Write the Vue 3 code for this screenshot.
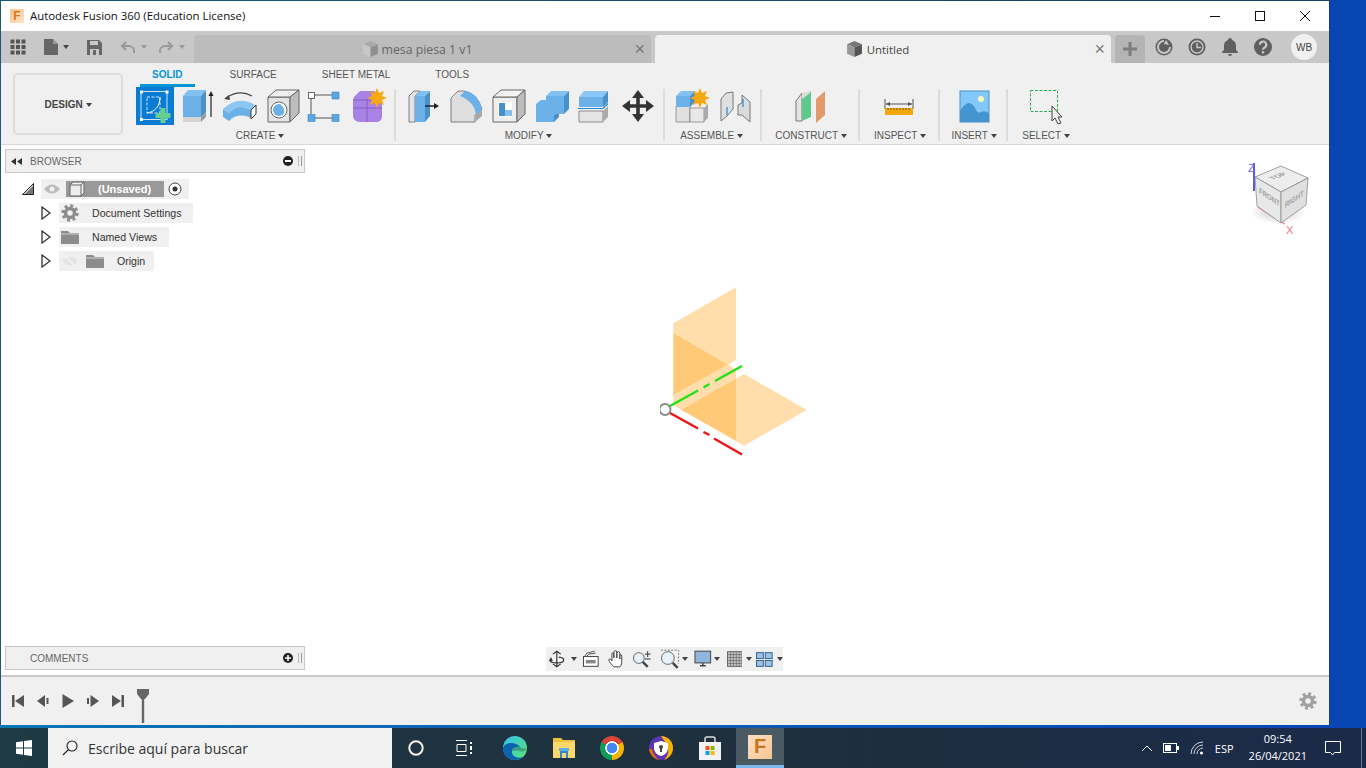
<template>
  <div class="desktop">
    <div class="window-row">
      <div class="window">
        <header class="titlebar">
          <span class="app-badge">F</span>
          <span class="title-text">Autodesk Fusion 360 (Education License)</span>
          <div class="win-controls">
            <span class="win-btn"><svg width="12" height="12" viewBox="0 0 12 12"><path d="M1 6.5h10" stroke="#111" /></svg></span>
            <span class="win-btn"><svg width="12" height="12" viewBox="0 0 12 12"><rect x="1.5" y="1.5" width="9" height="9" fill="none" stroke="#111" /></svg></span>
            <span class="win-btn"><svg width="12" height="12" viewBox="0 0 12 12"><path d="M1 1l10 10M11 1L1 11" stroke="#111" /></svg></span>
          </div>
        </header>

        <div class="tabbar">
          <div class="quick">
            <svg class="q-grid" width="16" height="16" viewBox="0 0 16 16" fill="#555">
              <rect v-for="c in gridCells" :key="c.k" :x="c.x" :y="c.y" width="4" height="4" />
            </svg>
            <svg class="q-file" width="14" height="16" viewBox="0 0 14 16"><path d="M0 0h9l5 5v11H0z" fill="#666" /><path d="M9 0l5 5H9z" fill="#999" /></svg>
            <span class="caret dark q-caret"></span>
            <svg class="q-save" width="15" height="15" viewBox="0 0 15 15"><path d="M0 0h12l3 3v12H0z" fill="#666" /><rect x="3" y="1" width="8" height="4" fill="#c8c8c8" /><rect x="3" y="9" width="9" height="6" fill="#c8c8c8" /><rect x="6" y="10" width="3" height="5" fill="#666" /></svg>
            <svg class="q-undo" width="14" height="13" viewBox="0 0 14 13"><path d="M5 1L1 5l4 4M1 5h7a5 5 0 0 1 5 5v2" fill="none" stroke="#999" stroke-width="2" /></svg>
            <span class="caret pale q-caret2"></span>
            <svg class="q-redo" width="14" height="13" viewBox="0 0 14 13"><path d="M9 1l4 4-4 4M13 5H6a5 5 0 0 0-5 5v2" fill="none" stroke="#999" stroke-width="2" /></svg>
            <span class="caret pale q-caret2"></span>
          </div>
          <div class="doc-tab inactive">
            <svg width="17" height="16" viewBox="0 0 16 15"><path d="M1 3l7-3 7 3-7 3z" fill="#aaa" /><path d="M1 3l7 3v9l-7-3z" fill="#c8c8c8" /><path d="M15 3L8 6v9l7-3z" fill="#8f8f8f" /></svg>
            <span class="doc-name">mesa piesa 1 v1</span>
            <span class="doc-close">×</span>
          </div>
          <div class="doc-tab active">
            <svg width="17" height="16" viewBox="0 0 16 15"><path d="M1 3l7-3 7 3-7 3z" fill="#777" /><path d="M1 3l7 3v9l-7-3z" fill="#999" /><path d="M15 3L8 6v9l7-3z" fill="#555" /></svg>
            <span class="doc-name">Untitled</span>
            <span class="doc-close">×</span>
          </div>
          <div class="plus-tile">
            <svg width="14" height="14" viewBox="0 0 14 14"><path d="M7 0v14M0 7h14" stroke="#7d7d7d" stroke-width="3" /></svg>
          </div>
          <div class="bar-icons">
            <svg width="18" height="18" viewBox="0 0 18 18"><circle cx="9" cy="9" r="8.5" fill="#5f5f5f" /><path d="M9 3a6 6 0 1 0 6 6" fill="none" stroke="#c8c8c8" stroke-width="2" /><path d="M11 2l3 5-5-1z" fill="#c8c8c8" /></svg>
            <svg width="18" height="18" viewBox="0 0 18 18"><circle cx="9" cy="9" r="8.5" fill="#5f5f5f" /><circle cx="9" cy="9" r="6" fill="none" stroke="#c8c8c8" stroke-width="1.4" /><path d="M9 5v4.500h4" fill="none" stroke="#c8c8c8" stroke-width="1.4" /></svg>
            <svg width="18" height="18" viewBox="0 0 16 18"><path d="M8 0a2 2 0 0 1 2 2c3 1 4 3 4 6v4l2 2v1H0v-1l2-2V8c0-3 1-5 4-6a2 2 0 0 1 2-2z" fill="#5f5f5f" /><path d="M6 16h4a2 2 0 0 1-4 0z" fill="#5f5f5f" /></svg>
            <svg width="18" height="18" viewBox="0 0 17 17"><circle cx="8.5" cy="8.5" r="8.5" fill="#5f5f5f" /><path d="M5.600 6.400a3 3 0 1 1 4.400 2.600c-1 .6-1.500 1-1.500 2.200" fill="none" stroke="#c8c8c8" stroke-width="2" /><rect x="7.400" y="12.400" width="2.200" height="2.200" fill="#c8c8c8" /></svg>
            <span class="avatar">WB</span>
          </div>
        </div>

        <div class="toolbar">
          <div class="design-slot">
            <button class="design-btn" type="button">DESIGN <span class="caret dark"></span></button>
          </div>
          <div class="ribbon">
            <nav class="ribbon-tabs">
              <span v-for="(t, i) in ribbonTabs" :key="t" class="ribbon-tab" :class="{ on: i === 0 }">{{ t }}</span>
            </nav>
            <div class="groups">
              <section class="group g-create">
                <div class="tools">
                  <svg class="ico sel" viewBox="0 0 38 38">
                    <rect x="5" y="4.500" width="26" height="28" fill="none" stroke="#cfe6f8" />
                    <path d="M4 3.500h3v3H4zM29.500 3.500h3v3h-3zM4 31h3v3H4z" fill="#fff" />
                    <rect x="11" y="10" width="13" height="16" fill="none" stroke="#cfe6f8" stroke-dasharray="3 1.500" />
                    <path d="M11 26c8-1 13-7 13-16" fill="none" stroke="#fff" />
                    <path d="M27 21v15M19.500 28.500h15" stroke="#63d08f" stroke-width="5" />
                  </svg>
                  <svg class="ico" viewBox="0 0 38 38">
                    <path d="M4 30h18v5H4z" fill="#d4d4d4" /><path d="M22 30l5-5v5l-5 5z" fill="#9a9a9a" />
                    <path d="M4 9h18v21H4z" fill="#6cb0e8" /><path d="M4 9l5-6h18l-5 6z" fill="#82c0f2" /><path d="M22 9l5-6v22l-5 5z" fill="#4a90c8" />
                    <path d="M32 30V7" stroke="#222" stroke-width="1.200" /><path d="M29.500 9L32 4l2.500 5z" fill="#222" />
                  </svg>
                  <svg class="ico" viewBox="0 0 38 38">
                    <path d="M5 11Q18 2 31 9" fill="none" stroke="#444" stroke-width="1.200" /><path d="M3 12l5-4 1 5z" fill="#444" />
                    <path d="M2 22Q17 8 34 18l-4 5Q17 16 8 26z" fill="#8cc6f5" />
                    <path d="M2 22v8l6 4v-8zM8 26Q17 16 30 23v8Q17 25 8 34z" fill="#6cb0e8" />
                    <path d="M30 23l5-5v9l-5 5z" fill="#fff" stroke="#333" />
                  </svg>
                  <svg class="ico" viewBox="0 0 38 38">
                    <path d="M4 10h22v25H4z" fill="#e4e4e4" stroke="#666" /><path d="M4 10l8-7h23l-9 7z" fill="#efefef" stroke="#666" /><path d="M26 10l9-7v23l-9 9z" fill="#bdbdbd" stroke="#666" />
                    <circle cx="15" cy="23" r="8" fill="#fff" stroke="#666" /><circle cx="15" cy="23" r="6" fill="#6cb0e8" /><path d="M17 17.500a6 6 0 0 1 3.500 7" fill="none" stroke="#fff" stroke-width="1.500" />
                  </svg>
                  <svg class="ico" viewBox="0 0 38 38">
                    <path d="M9 8h17M5 12v15M9 31h17" stroke="#555" />
                    <rect x="2.500" y="5.500" width="6" height="6" fill="#fff" stroke="#666" />
                    <rect x="26" y="5" width="7" height="7" fill="#5aa7e0" stroke="#3b87c0" stroke-width=".6" />
                    <rect x="2" y="27.500" width="7" height="7" fill="#5aa7e0" stroke="#3b87c0" stroke-width=".6" />
                    <rect x="26" y="27.500" width="7" height="7" fill="#5aa7e0" stroke="#3b87c0" stroke-width=".6" />
                  </svg>
                  <svg class="ico" viewBox="0 0 38 38">
                    <path d="M4 13q0-3 3-5l4-4h14l8 6v19q0 6-6 6H11q-7 0-7-7z" fill="#a882e4" />
                    <path d="M4 21h29M18 12v23M4 13h22" stroke="#7f5bbc" stroke-width=".9" fill="none" />
                    <path d="M28 1l2 5 5-2-2 5 5 2-5 2 2 5-5-2-2 5-2-5-5 2 2-5-5-2 5-2-2-5 5 2z" fill="#f7a80f" />
                  </svg>
                </div>
                <span class="group-label label-create">CREATE <span class="caret dark"></span></span>
              </section>

              <section class="group g-modify">
                <div class="tools">
                  <svg class="ico" viewBox="0 0 38 38">
                    <path d="M5 9l5-5h6L11 9v26H5z" fill="#e4e4e4" stroke="#666" stroke-width=".8" />
                    <path d="M11 9h10v26H11z" fill="#6cb0e8" /><path d="M11 9l5-5h10l-5 5z" fill="#82c0f2" /><path d="M21 9l5-5v25l-5 6z" fill="#4a90c8" />
                    <path d="M21 19h10" stroke="#222" stroke-width="1.500" /><path d="M30 16l5 3-5 3z" fill="#222" />
                  </svg>
                  <svg class="ico" viewBox="0 0 38 38">
                    <path d="M4 11l7-7h6q13 2 18 18l-7 6v7H4z" fill="#dedede" stroke="#666" stroke-width=".8" />
                    <path d="M18 4q13 2 17 18l-6 6q-1-13-16-19z" fill="#6cb0e8" /><path d="M29 28l6-6v7l-7 6z" fill="#a8a8a8" />
                  </svg>
                  <svg class="ico" viewBox="0 0 38 38">
                    <path d="M3 10h24v25H3z" fill="#eee" stroke="#666" /><path d="M3 10l8-7h24l-8 7z" fill="#f2f2f2" stroke="#666" /><path d="M27 10l8-7v24l-8 8z" fill="#bdbdbd" stroke="#666" />
                    <path d="M8 15h14v15H8z" fill="#fff" /><path d="M9 16h6v13H9z" fill="#4a90c8" /><path d="M15 23h7v6h-7z" fill="#82c0f2" />
                  </svg>
                  <svg class="ico" viewBox="0 0 38 38">
                    <path d="M3 17l5-4h13v22H3z" fill="#6cb0e8" /><path d="M21 28l5-5v7l-5 5z" fill="#4a90c8" />
                    <path d="M13 9l5-5h18l-5 5z" fill="#82c0f2" /><path d="M13 9h18v18H13z" fill="#6cb0e8" /><path d="M31 9l5-5v18l-5 5z" fill="#4a90c8" />
                  </svg>
                  <svg class="ico" viewBox="0 0 38 38">
                    <path d="M3 10l5-6h24l-5 6z" fill="#8cc6f5" /><path d="M3 10h24v10H3z" fill="#6cb0e8" /><path d="M27 10l5-6v11l-5 5z" fill="#4a90c8" />
                    <path d="M2 21.500h25l5-5" fill="none" stroke="#1e88d8" stroke-width="1.200" />
                    <path d="M3 24h24v11H3z" fill="#e4e4e4" stroke="#666" stroke-width=".7" /><path d="M27 24l5-5v11l-5 5z" fill="#aaa" />
                  </svg>
                  <svg class="ico" viewBox="0 0 38 38">
                    <path d="M19 3l6 8h-4.200v6.200H27V13l8 6-8 6v-4.200h-6.200V27H25l-6 8-6-8h4.200v-6.200H11V25l-8-6 8-6v4.200h6.200V11H13z" fill="#333" />
                  </svg>
                </div>
                <span class="group-label shift-left">MODIFY <span class="caret dark"></span></span>
              </section>

              <section class="group g-assemble">
                <div class="tools">
                  <svg class="ico" viewBox="0 0 38 38">
                    <path d="M3 19h14v16H3z" fill="#e0e0e0" stroke="#777" stroke-width=".7" /><path d="M17 21h14v14H17z" fill="#e8e8e8" stroke="#777" stroke-width=".7" /><path d="M31 21l4-4v14l-4 4z" fill="#aaa" />
                    <path d="M3 9l5-5h14l-5 5z" fill="#82c0f2" /><path d="M3 9h14v11H3z" fill="#6cb0e8" /><path d="M17 9l5-5v11l-5 5z" fill="#4a90c8" />
                    <path d="M27 1l2 5 5-2-2 5 5 2-5 2 2 5-5-2-2 5-2-5-5 2 2-5-5-2 5-2-2-5 5 2z" fill="#f7a80f" />
                  </svg>
                  <svg class="ico" viewBox="0 0 38 38">
                    <path d="M5 12l5-6 7-1v17l-6 7-6 5z" fill="#e0e0e0" stroke="#777" />
                    <path d="M22 18l4-2V8l8 7v20l-8-7h-4z" fill="#dcdcdc" stroke="#777" />
                    <path d="M11 20v8M27 12v8" stroke="#1e88d8" stroke-width="1.200" />
                  </svg>
                </div>
                <span class="group-label shift-left">ASSEMBLE <span class="caret dark"></span></span>
              </section>

              <section class="group g-construct">
                <div class="tools">
                  <svg class="ico" viewBox="0 0 38 38">
                    <path d="M4 14l6-8v28H4z" fill="#e4e4e4" stroke="#777" /><path d="M10 12l9-8v26l-9 4z" fill="#5fc98a" />
                    <path d="M10 6l8-2v2l-8 6z" fill="#ddd" />
                    <path d="M24 12l9-8v24l-9 8z" fill="#e4996a" />
                  </svg>
                </div>
                <span class="group-label">CONSTRUCT <span class="caret dark"></span></span>
              </section>

              <section class="group g-inspect">
                <div class="tools">
                  <svg class="ico" viewBox="0 0 38 38">
                    <path d="M4 12v10M32 12v10M5 17h26" stroke="#555" /><path d="M5 17l4-2v4zM31 17l-4-2v4z" fill="#555" />
                    <rect x="4" y="21" width="28" height="7" fill="#f4a70c" />
                    <path d="M7 21v2M10 21v2M13 21v2M16 21v2M19 21v2M22 21v2M25 21v2M28 21v2" stroke="#7a5a10" />
                  </svg>
                </div>
                <span class="group-label">INSPECT <span class="caret dark"></span></span>
              </section>

              <section class="group g-insert">
                <div class="tools">
                  <svg class="ico" viewBox="0 0 38 38">
                    <rect x="5" y="4" width="29" height="31" fill="#82c8fb" stroke="#4a90c8" />
                    <circle cx="26" cy="12" r="3" fill="#fbf5c0" />
                    <path d="M5 35V24q5-8 9-8t7 7q2 4 5 2t8 1v9z" fill="#4494cf" />
                  </svg>
                </div>
                <span class="group-label">INSERT <span class="caret dark"></span></span>
              </section>

              <section class="group g-select">
                <div class="tools">
                  <svg class="ico" viewBox="0 0 38 38">
                    <rect x="3.500" y="3.500" width="27" height="21" fill="none" stroke="#2eaa5a" stroke-dasharray="3 1.500" />
                    <path d="M25 19v15l3-3 3 6 3-1-3-6h4z" fill="#eee" stroke="#444" />
                  </svg>
                </div>
                <span class="group-label">SELECT <span class="caret dark"></span></span>
              </section>
            </div>
          </div>
        </div>

        <main class="canvas">
          <aside class="browser">
            <div class="panel-head">
              <svg width="11" height="7" viewBox="0 0 11 7" fill="#333"><path d="M5 0v7L0 3.500zM11 0v7L6 3.500z" /></svg>
              <span class="panel-title">BROWSER</span>
              <svg class="panel-end" width="10" height="10" viewBox="0 0 10 10"><circle cx="5" cy="5" r="5" fill="#222" /><path d="M2 5h6" stroke="#fff" stroke-width="2" /></svg>
              <span class="panel-grip"></span>
            </div>
            <div class="tree">
              <div class="tree-row root">
                <svg class="twisty" width="12" height="12" viewBox="0 0 12 12"><path d="M11.500 .5v11H.5z" fill="#ddd" stroke="#222" /><path d="M11 3v8H3z" fill="#777" /></svg>
                <div class="tree-pill">
                  <svg width="18" height="12" viewBox="0 0 18 12"><path d="M1 6q8-9 16 0-8 9-16 0z" fill="#bbb" /><circle cx="9" cy="6" r="2.500" fill="#f0f0f0" /></svg>
                  <div class="root-label">
                    <svg width="16" height="16" viewBox="0 0 16 16"><path d="M1 4l3-3h11v11l-3 3H1z" fill="#ededed" stroke="#666" /><path d="M1 4h11v11M12 4l3-3" fill="none" stroke="#666" /></svg>
                    <span>(Unsaved)</span>
                  </div>
                  <svg width="14" height="14" viewBox="0 0 14 14"><circle cx="7" cy="7" r="6" fill="#fff" stroke="#444" /><circle cx="7" cy="7" r="2.500" fill="#333" /></svg>
                </div>
              </div>
              <div class="tree-row">
                <svg class="twisty" width="10" height="14" viewBox="0 0 10 14"><path d="M1 1l8 6-8 6z" fill="#fff" stroke="#333" stroke-width="1.300" /></svg>
                <div class="tree-pill item settings">
                  <svg width="18" height="18" viewBox="0 0 18 18"><circle cx="9" cy="9" r="4.500" fill="none" stroke="#8c8c8c" stroke-width="3.500" /><circle cx="9" cy="9" r="7.200" fill="none" stroke="#8c8c8c" stroke-width="3" stroke-dasharray="2.900 2.750" /></svg>
                  <span class="tree-text">Document Settings</span>
                </div>
              </div>
              <div class="tree-row">
                <svg class="twisty" width="10" height="14" viewBox="0 0 10 14"><path d="M1 1l8 6-8 6z" fill="#fff" stroke="#333" stroke-width="1.300" /></svg>
                <div class="tree-pill item views">
                  <svg class="folder" width="18" height="13" viewBox="0 0 18 13"><path d="M0 0h7l2 2h9v11H0z" fill="#8c8c8c" /><path d="M0 3h18" stroke="#f0f0f0" stroke-width=".7" /></svg>
                  <span class="tree-text">Named Views</span>
                </div>
              </div>
              <div class="tree-row">
                <svg class="twisty" width="10" height="14" viewBox="0 0 10 14"><path d="M1 1l8 6-8 6z" fill="#fff" stroke="#333" stroke-width="1.300" /></svg>
                <div class="tree-pill item origin">
                  <svg width="18" height="14" viewBox="0 0 18 14"><path d="M1 7q8-9 16 0-8 9-16 0z" fill="#e3e3e3" /><path d="M3 1l12 12" stroke="#f0f0f0" stroke-width="2" /></svg>
                  <svg class="folder" width="18" height="13" viewBox="0 0 18 13"><path d="M0 0h7l2 2h9v11H0z" fill="#8c8c8c" /><path d="M0 3h18" stroke="#f0f0f0" stroke-width=".7" /></svg>
                  <span class="tree-text">Origin</span>
                </div>
              </div>
            </div>
          </aside>

          <svg class="origin-svg" width="160" height="180" viewBox="660 285 160 180">
            <polygon points="673.300,323.300 736,287.300 736,360 673.300,395" class="plane" />
            <polygon points="673.300,333.300 736,369.300 736,440.700 673.300,405" class="plane" />
            <polygon points="681.300,410 744,374 806.700,410 744,445.700" class="plane" />
            <path d="M670 406l28-15.500M703.500 387.500l6-3.500M715 381l27-15" stroke="#25e015" stroke-width="2.500" fill="none" />
            <path d="M670 413l28 15.500M703.500 432l6 3M714 438.500l28 16" stroke="#f01414" stroke-width="2.500" fill="none" />
            <circle cx="665" cy="409.500" r="5.500" fill="#fff" stroke="#8a8a8a" stroke-width="2" />
          </svg>

          <svg class="view-cube" width="70" height="80" viewBox="1245 160 70 80">
            <defs>
              <radialGradient id="cubeShade" cx="50%" cy="50%" r="50%">
                <stop offset="0%" stop-color="#888" stop-opacity=".5" />
                <stop offset="100%" stop-color="#999" stop-opacity="0" />
              </radialGradient>
            </defs>
            <ellipse cx="1278" cy="212" rx="28" ry="12" fill="url(#cubeShade)" />
            <path d="M1254 163v28" stroke="#5a5ae6" stroke-width="2" />
            <path d="M1258 207l27 17" stroke="#f3a3a3" stroke-width="2" />
            <polygon points="1255,177 1281,166 1308,178 1281,192" fill="#ededed" stroke="#8a8a8a" stroke-width=".8" />
            <polygon points="1255,177 1281,192 1281,223 1257,206" fill="#e8e8e8" stroke="#8a8a8a" stroke-width=".8" />
            <polygon points="1281,192 1308,178 1306,205 1281,223" fill="#e0e0e0" stroke="#8a8a8a" stroke-width=".8" />
            <text class="cube-text" transform="matrix(.9 -.35 .9 .4 1273 180)">TOP</text>
            <text class="cube-text" transform="matrix(.75 .5 0 1 1259 193)">FRONT</text>
            <text class="cube-text" transform="matrix(.75 -.5 0 1 1285 208)">RIGHT</text>
            <text class="axis-z" x="1248" y="172">Z</text>
            <text class="axis-x" x="1286" y="234">X</text>
          </svg>

          <aside class="comments">
            <span class="panel-title">COMMENTS</span>
            <svg class="panel-end" width="10" height="10" viewBox="0 0 10 10"><circle cx="5" cy="5" r="5" fill="#222" /><path d="M2 5h6M5 2v6" stroke="#fff" stroke-width="1.600" /></svg>
            <span class="panel-grip"></span>
          </aside>

          <div class="navbar">
            <svg width="18" height="18" viewBox="0 0 18 18"><path d="M9 1v16M5 4l4-3 4 3M5 14l4 3 4-3" fill="none" stroke="#333" stroke-width="1.200" /><path d="M2 10a7 3 0 0 0 14 0 7 3 0 0 0-5-3" fill="none" stroke="#333" stroke-width="1.300" /><path d="M3 7l-2 4 4 0z" fill="#333" /></svg>
            <span class="caret dark ml5"></span>
            <svg class="ml5" width="18" height="18" viewBox="0 0 18 18"><rect x="1.500" y="6.500" width="15" height="10" fill="#fff" stroke="#444" /><rect x="4" y="10" width="10" height="3.500" fill="#888" /><path d="M3 6l2-3 8-2M5 6l2-2 7-1" fill="none" stroke="#555" /></svg>
            <svg class="ml9" width="18" height="18" viewBox="0 0 18 18"><path d="M6 17c-2-2-5-5-5-7s2-1 3 1V4c0-2 2-2 2 0v4-6c0-2 3-2 3 0v6-5c0-2 3-2 3 0v6-3c0-2 2-2 2 0v6c0 3-1 4-2 5z" fill="#fff" stroke="#444" /></svg>
            <svg class="ml6" width="20" height="18" viewBox="0 0 20 18"><circle cx="7" cy="8" r="5.500" fill="#e8f2fa" stroke="#666" /><path d="M11 12l5 5" stroke="#444" stroke-width="2.500" /><path d="M16 1v6M13 4h6M13 9h6" stroke="#333" /></svg>
            <svg class="ml9" width="20" height="20" viewBox="0 0 20 20"><path d="M1 1h18v14" fill="none" stroke="#777" stroke-dasharray="2 1.500" /><circle cx="8" cy="9" r="6.500" fill="#e8f2fa" stroke="#666" /><path d="M13 14l5 5" stroke="#444" stroke-width="2.500" /></svg>
            <span class="caret dark ml2"></span>
            <svg class="ml6" width="18" height="18" viewBox="0 0 18 18"><rect x="1" y="1" width="16" height="12" fill="#8fb6dc" stroke="#444" /><path d="M6 16h6M9 13v3" stroke="#444" stroke-width="1.500" /></svg>
            <span class="caret dark ml2"></span>
            <svg class="ml7" width="16" height="16" viewBox="0 0 16 16"><rect x=".5" y=".5" width="15" height="15" fill="#c4c4c4" stroke="#666" /><path d="M3.500 0v16M6.500 0v16M9.500 0v16M12.500 0v16M0 3.500h16M0 6.500h16M0 9.500h16M0 12.500h16" stroke="#666" stroke-width=".7" /></svg>
            <span class="caret dark ml4"></span>
            <svg class="ml4" width="17" height="15" viewBox="0 0 17 15"><rect x=".5" y=".5" width="7" height="6" fill="#9cc3e6" stroke="#335f8f" /><rect x="9.500" y=".5" width="7" height="6" fill="#9cc3e6" stroke="#335f8f" /><rect x=".5" y="8.500" width="7" height="6" fill="#9cc3e6" stroke="#335f8f" /><rect x="9.500" y="8.500" width="7" height="6" fill="#9cc3e6" stroke="#335f8f" /></svg>
            <span class="caret dark ml4"></span>
          </div>
        </main>

        <footer class="timeline">
          <div class="player">
            <svg width="14" height="14" viewBox="0 0 14 14" fill="#555"><rect x="1" y="1" width="2.500" height="12" /><path d="M13 1v12L4 7z" /></svg>
            <svg width="14" height="14" viewBox="0 0 14 14" fill="#555"><path d="M9 1v12L1 7z" /><rect x="10.500" y="4" width="2" height="6" /></svg>
            <svg width="14" height="14" viewBox="0 0 14 14" fill="#555"><path d="M1.500 0v14L13 7z" /></svg>
            <svg width="14" height="14" viewBox="0 0 14 14" fill="#555"><rect x="1" y="4" width="2" height="6" /><path d="M4.500 1v12L13 7z" /></svg>
            <svg width="14" height="14" viewBox="0 0 14 14" fill="#555"><path d="M1 1v12l9-6z" /><rect x="10.500" y="1" width="2.500" height="12" /></svg>
          </div>
          <svg class="marker" width="14" height="34" viewBox="0 0 14 34"><path d="M1 0h12v5l-4 5H5L1 5z" fill="#666" /><rect x="5.800" y="8" width="2.400" height="26" fill="#666" /></svg>
          <svg class="timeline-gear" width="18" height="18" viewBox="0 0 18 18"><circle cx="9" cy="9" r="4.500" fill="none" stroke="#a0a0a0" stroke-width="3.500" /><circle cx="9" cy="9" r="7.200" fill="none" stroke="#a0a0a0" stroke-width="3" stroke-dasharray="2.900 2.750" /></svg>
        </footer>
      </div>
    </div>

    <div class="taskbar">
      <div class="start">
        <svg width="16" height="16" viewBox="0 0 16 16" fill="#fff"><path d="M0 2.200l7-1v6.300H0zM8 1l8-1v7.500H8zM0 8.500h7v6.300l-7-1zM8 8.500h8V16l-8-1z" /></svg>
      </div>
      <div class="search">
        <svg width="16" height="16" viewBox="0 0 16 16"><circle cx="10" cy="6" r="5" fill="none" stroke="#222" stroke-width="1.100" /><path d="M6.500 9.500L1 15" stroke="#222" stroke-width="1.100" /></svg>
        <span>Escribe aquí para buscar</span>
      </div>
      <div class="task-slot"><svg width="16" height="16" viewBox="0 0 16 16"><circle cx="8" cy="8" r="6.700" fill="none" stroke="#f2f2f2" stroke-width="2" /></svg></div>
      <div class="task-slot"><svg width="18" height="16" viewBox="0 0 18 16"><path d="M1 .5h11M1 15.500h11M2 4.500h9v7H2z" fill="none" stroke="#fff" /><path d="M15 2h2v2h-2zM15 6h2v4h-2zM15 12h2v2h-2z" fill="#fff" /></svg></div>
      <div class="task-slot app first-app"><svg width="24" height="24" viewBox="0 0 24 24"><defs><linearGradient id="edgeA" x1="0" y1="0" x2="1" y2="1"><stop offset="0" stop-color="#35c1f1" /><stop offset="1" stop-color="#5be36f" /></linearGradient></defs><circle cx="12" cy="12" r="12" fill="url(#edgeA)" /><path d="M0 12c0 8 6 12 12 12 3 0 6-1 8-3-6 2-12-1-11-6 0-3 4-5 8-4-3-5-15-6-17 1z" fill="#0c62ad" /><path d="M9 15c0-3 4-5 8-4 2 1 3 2 7 1-1 3-5 4-8 3s-5 0-7 0z" fill="#1f3a44" opacity=".35" /></svg></div>
      <div class="task-slot app"><svg width="22" height="20" viewBox="0 0 22 20"><path d="M0 0h8l2 2h12v18H0z" fill="#f0c040" /><path d="M0 4h22v16H0z" fill="#fcd86a" /><path d="M7 12h8v8h-2v-5H9v5H7z" fill="#2f88d0" /><path d="M6 10h10v3H6z" fill="#5ab0ee" /></svg></div>
      <div class="task-slot app"><span class="chrome"></span></div>
      <div class="task-slot app"><svg width="24" height="24" viewBox="0 0 24 24"><circle cx="12" cy="12" r="12" fill="#5e35b1" /><path d="M12 0a12 12 0 0 1 12 12c0 6-4 10-9 12 5-5 6-12 1-18z" fill="#f4b400" /><path d="M0 13c1 6 5 10 11 11-4-2-7-6-8-11z" fill="#ef6c00" /><path d="M12 5l7 2v5c0 4-3 7-7 8-4-1-7-4-7-8V7z" fill="#fff" /><circle cx="12" cy="11" r="2" fill="#444" /><rect x="11" y="12" width="2" height="4" fill="#444" /></svg></div>
      <div class="task-slot app"><svg width="24" height="24" viewBox="0 0 24 24"><path d="M7 6V3q0-2 2-2h6q2 0 2 2v3" fill="none" stroke="#ddd" stroke-width="1.500" /><path d="M1 6h22v18H1z" fill="#f2f2f2" /><path d="M7.500 10h4v4h-4z" fill="#f25022" /><path d="M12.500 10h4v4h-4z" fill="#7fba00" /><path d="M7.500 15h4v4h-4z" fill="#00a4ef" /><path d="M12.500 15h4v4h-4z" fill="#ffb900" /></svg></div>
      <div class="task-slot fusion"><span class="fusion-tile">F</span></div>
      <div class="tray">
        <svg width="12" height="7" viewBox="0 0 12 7"><path d="M1 6l5-5 5 5" fill="none" stroke="#fff" /></svg>
        <svg class="tray-batt" width="16" height="10" viewBox="0 0 16 10"><rect x=".5" y=".5" width="13" height="9" fill="none" stroke="#fff" /><rect x="2" y="2" width="6" height="6" fill="#fff" /><rect x="14" y="3" width="2" height="4" fill="#fff" /></svg>
        <svg class="tray-wifi" width="14" height="14" viewBox="0 0 14 14"><path d="M1 13A12 12 0 0 1 13 1M4 13a9 9 0 0 1 9-9M7 13a6 6 0 0 1 6-6" fill="none" stroke="#cfd4dc" /><circle cx="11.500" cy="12" r="1.500" fill="#fff" /></svg>
        <span class="tray-lang">ESP</span>
        <div class="clock"><span>09:54</span><span>26/04/2021</span></div>
        <svg class="tray-note" width="16" height="15" viewBox="0 0 16 15"><path d="M.5.5h15v11H9.500L7.500 14l-2-2.500h-5z" fill="none" stroke="#fff" /></svg>
      </div>
    </div>
  </div>
</template>

<script setup>
const ribbonTabs = ['SOLID', 'SURFACE', 'SHEET METAL', 'TOOLS']

const gridCells = []
for (let y = 0; y < 3; y++) {
  for (let x = 0; x < 3; x++) {
    gridCells.push({ k: `${x}-${y}`, x: x * 5.5 + 0.5, y: y * 5.5 + 0.5 })
  }
}
</script>

<style>
html,
body {
  margin: 0;
  overflow: hidden;
}
</style>

<style scoped>
.desktop {
  display: flex;
  flex-direction: column;
  width: 1366px;
  height: 768px;
  overflow: hidden;
  font-family: "Liberation Sans", Arial, sans-serif;
  background: linear-gradient(90deg, #0b76b4, #0a4fb4 70%, #0745b2);
}

.window-row {
  height: 728px;
  flex: none;
}

.window {
  display: flex;
  flex-direction: column;
  box-sizing: border-box;
  width: 1330px;
  height: 725px;
  padding: 1px 1px 0;
  background: linear-gradient(90deg, #175a7c, #183f70);
}

.titlebar {
  display: flex;
  align-items: center;
  flex: none;
  height: 30px;
  background: #fff;
}

.app-badge {
  display: flex;
  align-items: center;
  justify-content: center;
  width: 14px;
  height: 14px;
  margin-left: 9px;
  font-size: 12px;
  font-weight: 700;
  color: #d9791f;
  background: linear-gradient(135deg, #f9c48c, #fbe3c8);
}

.title-text {
  margin-top: -2px;
  margin-left: 6px;
  font-family: "Open Sans", sans-serif;
  font-size: 11.4px;
  color: #111;
}

.win-controls {
  display: flex;
  margin-right: 2px;
  margin-left: auto;
}

.win-btn {
  display: flex;
  align-items: center;
  justify-content: center;
  width: 45px;
  height: 30px;
}

.tabbar {
  display: flex;
  align-items: flex-end;
  flex: none;
  height: 32px;
  background: #c8c8c8;
}

.quick {
  display: flex;
  align-items: center;
  flex: none;
  width: 193px;
  height: 32px;
}

.q-grid { margin-left: 9px; }
.q-file { margin-left: 18px; }
.q-caret { margin-left: 5px; }
.q-save { margin-left: 18px; }
.q-undo { margin-left: 19px; }
.q-caret2 { margin-left: 6px; }
.q-redo { margin-left: 12px; }

.caret {
  display: inline-block;
  width: 0;
  height: 0;
  vertical-align: middle;
  border-top: 4px solid #444;
  border-right: 3.5px solid transparent;
  border-left: 3.5px solid transparent;
}

.caret.pale { border-top-color: #999; }
.caret.dark { border-top-color: #444; }

.doc-tab {
  position: relative;
  display: flex;
  align-items: center;
  justify-content: center;
  flex: none;
  gap: 3px;
  box-sizing: border-box;
  height: 28px;
  margin-right: 4px;
  padding-right: 11px;
  font-family: "Open Sans", sans-serif;
  font-size: 12.3px;
  border-radius: 4px 4px 0 0;
}

.doc-tab.inactive {
  width: 457px;
  color: #666;
  background: #bcbcbc;
}

.doc-tab.active {
  width: 456px;
  gap: 4px;
  font-size: 11.4px;
  color: #444;
  background: #f0f0f0;
}

.doc-close {
  position: absolute;
  right: 6px;
  font-family: "Liberation Sans", sans-serif;
  font-size: 18px;
  line-height: 18px;
  color: #777;
}

.plus-tile {
  display: flex;
  align-items: center;
  justify-content: center;
  flex: none;
  width: 30px;
  height: 28px;
  background: #b4b4b4;
  border-radius: 4px 4px 0 0;
}

.bar-icons {
  display: flex;
  align-items: center;
  flex: 1;
  gap: 15px;
  height: 32px;
  padding-left: 10px;
}

.avatar {
  display: flex;
  align-items: center;
  justify-content: center;
  width: 26px;
  height: 26px;
  margin-left: 4px;
  font-size: 10px;
  color: #444;
  background: #f0f0f0;
  border-radius: 50%;
}

.toolbar {
  display: flex;
  flex: none;
  box-sizing: border-box;
  height: 82px;
  background: #f0f0f0;
  border-bottom: 1px solid #d8d8d8;
}

.design-slot {
  flex: none;
  width: 135px;
  padding: 10px 0 0 12px;
  box-sizing: border-box;
}

.design-btn {
  width: 110px;
  height: 62px;
  padding: 0;
  font-family: inherit;
  font-size: 10px;
  font-weight: 700;
  color: #444;
  background: #f0f0f0;
  border: 2px solid #dcdcdc;
  border-radius: 5px;
}

.ribbon {
  display: flex;
  flex-direction: column;
}

.ribbon-tabs {
  display: flex;
  flex: none;
  gap: 21px;
  height: 24px;
  padding-left: 4px;
}

.ribbon-tab {
  box-sizing: border-box;
  padding: 6px 12px 0;
  font-size: 10px;
  line-height: 12px;
  color: #555;
}

.ribbon-tab.on {
  margin-right: 2px;
  font-weight: 700;
  color: #0696d7;
  border-bottom: 3px solid #0696d7;
}

.groups {
  display: flex;
  height: 57px;
}

.group {
  display: flex;
  flex-direction: column;
  align-items: center;
  flex: none;
  box-sizing: content-box;
  height: 52px;
  margin-top: 2px;
  border-right: 2px solid #dcdcdc;
}

.g-create { width: 258px; }
.g-modify { width: 267px; }
.g-assemble { width: 95px; }
.g-construct { width: 94px; padding-left: 2px; }
.g-inspect { width: 76px; padding-left: 2px; }
.g-insert { width: 64px; padding-left: 2px; }
.g-select { width: 72px; padding-left: 2px; border-right: 0; }

.tools {
  display: flex;
  gap: 4.6px;
  height: 38px;
  margin-top: -2px;
}

.g-create .tools { align-self: flex-start; }
.g-modify .tools { align-self: flex-start; gap: 5px; margin-left: 8px; }
.g-assemble .tools { align-self: flex-start; gap: 5px; margin-left: 8px; }

.ico {
  display: block;
  flex: none;
  width: 38px;
  height: 38px;
}

.ico.sel {
  background: #0a7bd3;
}

.group-label {
  margin-top: 5px;
  font-size: 10px;
  line-height: 12px;
  color: #555;
  white-space: nowrap;
}

.label-create {
  margin-right: 10px;
}

.shift-left {
  margin-right: 2px;
}

.canvas {
  position: relative;
  flex: 1;
  min-height: 0;
  background: #fff;
  border-bottom: 2px solid #c8c8c8;
}

.browser {
  position: absolute;
  top: 4px;
  left: 4px;
  width: 300px;
}

.panel-head,
.comments {
  display: flex;
  align-items: center;
  box-sizing: border-box;
  height: 24px;
  padding-left: 5px;
  background: #f0f0f0;
  border: 1px solid #c8c8c8;
}

.panel-title {
  margin-left: 8px;
  font-size: 10px;
  color: #666;
}

.panel-end {
  margin-left: auto;
}

.panel-grip {
  width: 2px;
  height: 10px;
  margin: 0 2px 0 5px;
  border-right: 1px solid #999;
  border-left: 1px solid #bbb;
}

.tree {
  padding-top: 6px;
}

.tree-row {
  display: flex;
  align-items: center;
  height: 24px;
  padding-left: 36px;
}

.tree-row .twisty {
  flex: none;
  margin-right: 8px;
}

.tree-row.root {
  height: 20px;
  margin-bottom: 2px;
  padding-left: 17px;
}

.tree-row.root .twisty {
  margin-right: 7px;
}

.tree-pill {
  display: flex;
  align-items: center;
  height: 20px;
  background: #f0f0f0;
}

.tree-row.root .tree-pill {
  box-sizing: border-box;
  width: 148px;
  padding-left: 2px;
}

.root-label {
  display: flex;
  align-items: center;
  box-sizing: border-box;
  width: 98px;
  height: 16px;
  margin: 0 4px 0 5px;
  padding-left: 3px;
  font-size: 11px;
  font-weight: 700;
  color: #fff;
  background: #999;
}

.root-label span {
  margin-left: 13px;
}

.tree-pill.item {
  box-sizing: border-box;
  padding-left: 2px;
}

.tree-pill.settings { width: 134px; }
.tree-pill.views { width: 110px; }
.tree-pill.origin { width: 95px; }

.tree-text {
  margin-left: 13px;
  font-size: 10.6px;
  color: #333;
  white-space: nowrap;
}

.tree-pill.origin .folder {
  margin-left: 7px;
}

.origin-svg {
  position: absolute;
  top: 140px;
  left: 659px;
}

.plane {
  fill: #ffa726;
  fill-opacity: 0.38;
}

.view-cube {
  position: absolute;
  top: 15px;
  left: 1244px;
}

.cube-text {
  font-size: 8px;
  font-weight: 700;
  fill: #a0a0a0;
}

.axis-z {
  font-size: 11px;
  fill: #6a6ae6;
}

.axis-x {
  font-size: 11px;
  fill: #ee7a7a;
}

.comments {
  position: absolute;
  bottom: 5px;
  left: 4px;
  width: 300px;
  padding-left: 16px;
}

.navbar {
  position: absolute;
  bottom: 4px;
  left: 545px;
  display: flex;
  align-items: center;
  box-sizing: border-box;
  width: 237px;
  height: 24px;
  padding-left: 2px;
  background: #f0f0f0;
}

.ml2 { margin-left: 2px; }
.ml4 { margin-left: 4px; }
.ml5 { margin-left: 5px; }
.ml6 { margin-left: 6px; }
.ml7 { margin-left: 7px; }
.ml9 { margin-left: 9px; }

.timeline {
  display: flex;
  align-items: center;
  flex: none;
  height: 48px;
  background: #f0f0f0;
}

.player {
  display: flex;
  gap: 11px;
  margin-left: 10px;
}

.marker {
  margin: 7px 0 -3px 11px;
}

.timeline-gear {
  margin-right: 12px;
  margin-left: auto;
}

.taskbar {
  display: flex;
  align-items: center;
  flex: none;
  height: 40px;
  background: linear-gradient(90deg, #1e3a44, #1f2f3d 55%, #1b2a49);
}

.start {
  display: flex;
  align-items: center;
  justify-content: center;
  flex: none;
  width: 48px;
  height: 40px;
}

.search {
  display: flex;
  align-items: center;
  flex: none;
  box-sizing: border-box;
  width: 344px;
  height: 40px;
  padding-left: 14px;
  font-family: "Open Sans", sans-serif;
  font-size: 14px;
  color: #333;
  background: #f2f2f2;
}

.search span {
  margin-left: 10px;
}

.task-slot {
  display: flex;
  align-items: center;
  justify-content: center;
  flex: none;
  width: 48px;
  height: 40px;
}

.task-slot.app {
  width: 48.75px;
}

.task-slot.first-app {
  margin-left: 2.5px;
}

.chrome {
  display: block;
  width: 24px;
  height: 24px;
  background:
    radial-gradient(circle, #4285f4 0 5px, #fff 5.5px 6.5px, transparent 7px),
    conic-gradient(from 300deg, #db4437 0 120deg, #f4b400 120deg 240deg, #0f9d58 240deg);
  border-radius: 50%;
}

.task-slot.fusion {
  box-sizing: border-box;
  margin-left: 1.75px;
  background: #4a5a63;
  border-bottom: 3px solid #76b9ed;
}

.fusion-tile {
  display: flex;
  align-items: center;
  justify-content: center;
  width: 24px;
  height: 24px;
  font-size: 20px;
  font-weight: 700;
  color: #c8731e;
  background: linear-gradient(135deg, #fbe1c6, #f7c48f);
}

.tray {
  display: flex;
  align-items: center;
  height: 40px;
  margin-right: 4px;
  margin-left: auto;
  padding-right: 20px;
  font-family: "Open Sans", sans-serif;
  font-size: 11px;
  color: #fff;
  border-right: 1px solid #6b7484;
}

.tray-batt { margin-left: 10px; }
.tray-wifi { margin-left: 11px; }
.tray-lang { margin-left: 11px; }

.clock {
  display: flex;
  flex-direction: column;
  align-items: center;
  gap: 2px;
  margin-left: 15px;
  padding-bottom: 2px;
  line-height: 15px;
}

.tray-note {
  margin-left: 18px;
}
</style>
